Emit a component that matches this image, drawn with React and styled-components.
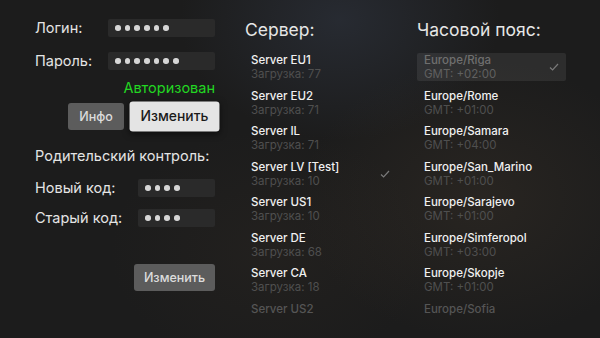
import React from "react";
import styled, { createGlobalStyle } from "styled-components";

const GlobalStyle = createGlobalStyle`
  html, body {
    margin: 0;
    padding: 0;
    background: #1c1c1c;
  }
  body {
    font-family: Inter, "Noto Sans", "DejaVu Sans", sans-serif;
  }
`;

const Screen = styled.div`
  width: 600px;
  height: 338px;
  overflow: hidden;
  box-sizing: border-box;
  padding: 19px 0 0 35px;
  display: grid;
  grid-template-columns: 210px 172px 150px;
  align-items: start;
  background:
    radial-gradient(ellipse 160px 120px at 340px 20px, rgba(60, 70, 90, 0.35), transparent),
    radial-gradient(ellipse 180px 140px at 480px 200px, rgba(70, 58, 45, 0.3), transparent),
    radial-gradient(ellipse 160px 120px at 270px 250px, rgba(60, 50, 40, 0.2), transparent),
    #1c1c1c;
  color: #e6e6e6;
`;

const Settings = styled.div`
  width: 180px;
  display: flex;
  flex-direction: column;
`;

const FieldRow = styled.div`
  display: flex;
  align-items: center;
  justify-content: space-between;
  height: 18px;
  margin-bottom: ${(p) => p.$gap || 0}px;
`;

const Label = styled.span`
  font-size: 14.5px;
  color: #e4e4e4;
  line-height: 18px;
`;

const Input = styled.div`
  width: ${(p) => p.$width}px;
  height: 18px;
  box-sizing: border-box;
  padding-left: 7px;
  background: #2a2a2a;
  border-radius: 2px;
  display: flex;
  align-items: center;
  gap: 4.2px;
`;

const Dot = styled.span`
  width: 5.5px;
  height: 5.5px;
  border-radius: 50%;
  background: #d6d6d6;
`;

const Status = styled.div`
  align-self: flex-end;
  color: #22d622;
  font-size: 14.5px;
  line-height: 18px;
  margin-top: 9px;
`;

const ButtonRow = styled.div`
  display: flex;
  justify-content: flex-end;
  align-items: center;
  gap: 10px;
  margin-top: 6px;
`;

const Button = styled.div`
  height: 27px;
  width: ${(p) => p.$width}px;
  display: flex;
  align-items: center;
  justify-content: center;
  font-size: 12.5px;
  border-radius: 3px;
  background: ${(p) => (p.$focused ? "#e4e4e4" : "#5c5c5c")};
  color: ${(p) => (p.$focused ? "#1a1a1a" : "#dcdcdc")};
  transform: ${(p) => (p.$focused ? "scale(1.11)" : "none")};
  box-shadow: ${(p) => (p.$focused ? "0 2px 6px rgba(0,0,0,0.5)" : "none")};
  font-weight: 500;
`;

const Section = styled.div`
  font-size: 14.5px;
  line-height: 18px;
  color: #e4e4e4;
  margin: 17px 0 14px;
`;

const SaveRow = styled.div`
  display: flex;
  justify-content: flex-end;
  margin-top: 37px;
`;

const Column = styled.div`
  display: flex;
  flex-direction: column;
`;

const Heading = styled.div`
  font-size: 17.5px;
  line-height: 22px;
  color: #e6e6e6;
  margin-bottom: 12px;
`;

const Item = styled.div`
  width: ${(p) => p.$width}px;
  height: 28px;
  margin-bottom: 7.5px;
  box-sizing: border-box;
  padding: 0 ${(p) => p.$pad}px;
  display: flex;
  align-items: center;
  justify-content: space-between;
  border-radius: 2px;
  background: ${(p) => (p.$selected ? "rgba(255,255,255,0.08)" : "transparent")};
`;

const ItemText = styled.div`
  align-self: stretch;
  display: flex;
  flex-direction: column;
`;

const Name = styled.span`
  font-size: 11.5px;
  line-height: 14px;
  font-weight: 500;
  color: ${(p) => (p.$dim ? "#555" : p.$muted ? "#6f6f6f" : "#f0f0f0")};
`;

const Sub = styled.span`
  font-size: 11.5px;
  line-height: 14px;
  color: ${(p) => (p.$muted ? "#606060" : "#4f4f4f")};
`;

function Check() {
  return (
    <svg width="10" height="8" viewBox="0 0 10 8">
      <polyline
        points="1,4.5 3.6,7 9,1"
        fill="none"
        stroke="#7a7a7a"
        strokeWidth="1.2"
      />
    </svg>
  );
}

function Dots({ count }) {
  return Array.from({ length: count }, (_, i) => <Dot key={i} />);
}

const servers = [
  { name: "Server EU1", load: 77 },
  { name: "Server EU2", load: 71 },
  { name: "Server IL", load: 71 },
  { name: "Server LV [Test]", load: 10, selected: true },
  { name: "Server US1", load: 10 },
  { name: "Server DE", load: 68 },
  { name: "Server CA", load: 18 },
  { name: "Server US2", dim: true },
];

const zones = [
  { name: "Europe/Riga", gmt: "+02:00", selected: true },
  { name: "Europe/Rome", gmt: "+01:00" },
  { name: "Europe/Samara", gmt: "+04:00" },
  { name: "Europe/San_Marino", gmt: "+01:00" },
  { name: "Europe/Sarajevo", gmt: "+01:00" },
  { name: "Europe/Simferopol", gmt: "+03:00" },
  { name: "Europe/Skopje", gmt: "+01:00" },
  { name: "Europe/Sofia", dim: true },
];

export default function App() {
  return (
    <>
      <GlobalStyle />
      <Screen>
        <Settings>
          <FieldRow $gap={15}>
            <Label>Логин:</Label>
            <Input $width={107}>
              <Dots count={6} />
            </Input>
          </FieldRow>
          <FieldRow>
            <Label>Пароль:</Label>
            <Input $width={107}>
              <Dots count={7} />
            </Input>
          </FieldRow>
          <Status>Авторизован</Status>
          <ButtonRow>
            <Button $width={56}>Инфо</Button>
            <Button $width={81} $focused>
              Изменить
            </Button>
          </ButtonRow>
          <Section>Родительский контроль:</Section>
          <FieldRow $gap={12}>
            <Label>Новый код:</Label>
            <Input $width={77}>
              <Dots count={4} />
            </Input>
          </FieldRow>
          <FieldRow>
            <Label>Старый код:</Label>
            <Input $width={77}>
              <Dots count={4} />
            </Input>
          </FieldRow>
          <SaveRow>
            <Button $width={81}>Изменить</Button>
          </SaveRow>
        </Settings>

        <Column>
          <Heading>Сервер:</Heading>
          {servers.map((s) => (
            <Item key={s.name} $pad={6} $width={151}>
              <ItemText>
                <Name $dim={s.dim}>{s.name}</Name>
                {s.load !== undefined && <Sub>Загрузка: {s.load}</Sub>}
              </ItemText>
              {s.selected && <Check />}
            </Item>
          ))}
        </Column>

        <Column>
          <Heading>Часовой пояс:</Heading>
          {zones.map((z) => (
            <Item key={z.name} $pad={7} $width={149} $selected={z.selected}>
              <ItemText>
                <Name $dim={z.dim} $muted={z.selected}>
                  {z.name}
                </Name>
                {z.gmt && <Sub $muted={z.selected}>GMT: {z.gmt}</Sub>}
              </ItemText>
              {z.selected && <Check />}
            </Item>
          ))}
        </Column>
      </Screen>
    </>
  );
}
